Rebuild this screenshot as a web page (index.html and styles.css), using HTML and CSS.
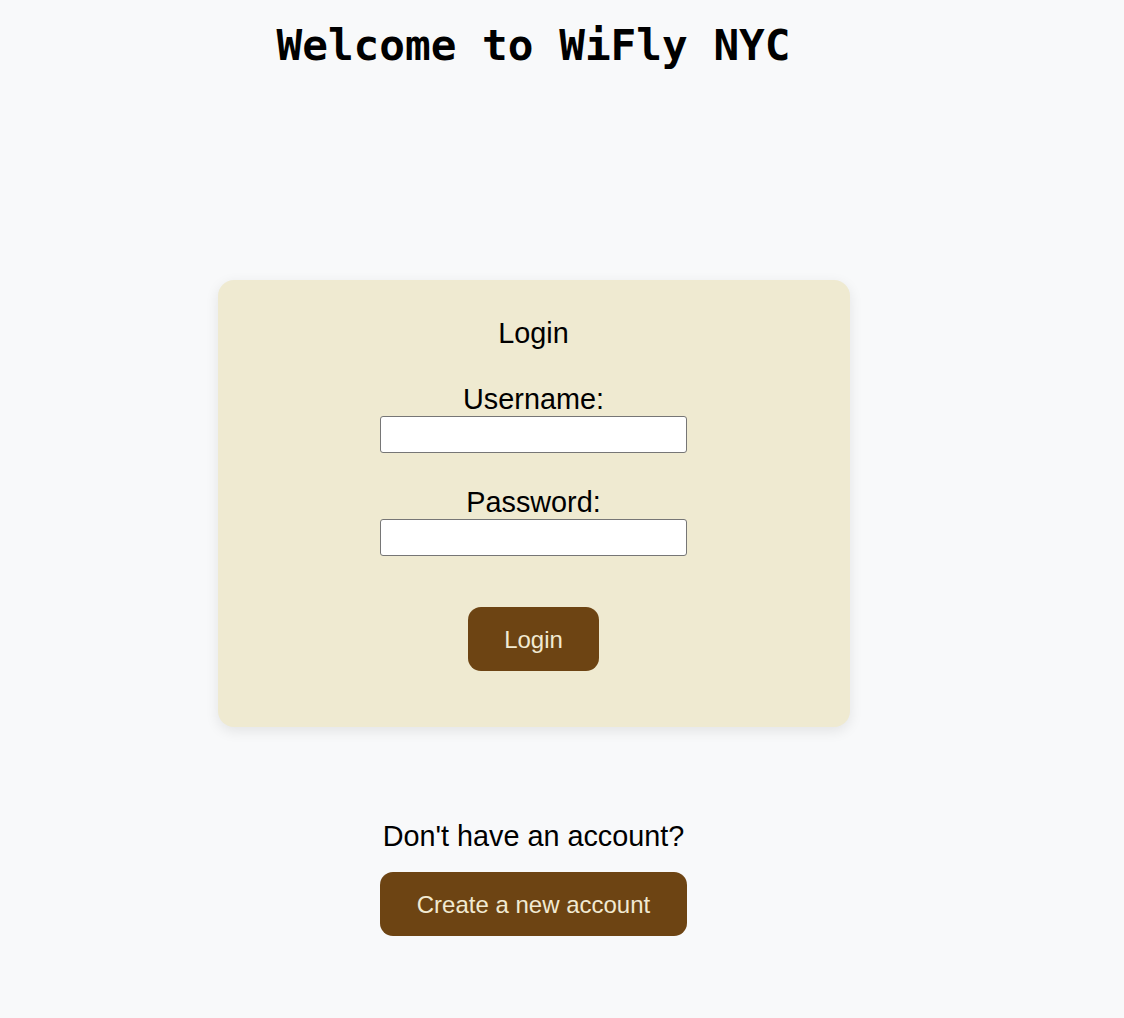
FILE: index.html
```html
<!DOCTYPE html>
<html lang="en">
<head>
<meta charset="utf-8">
<title>WiFly NYC</title>
<link rel="stylesheet" href="styles.css">
</head>
<body>
<div class="page">
  <h1 class="title">Welcome to WiFly NYC</h1>
  <form class="card">
    <h2 class="card-title">Login</h2>
    <label class="field-label" for="username">Username:</label>
    <input class="field-input" id="username" type="text">
    <label class="field-label" for="password">Password:</label>
    <input class="field-input" id="password" type="password">
    <button class="btn btn-login" type="button">Login</button>
  </form>
  <p class="signup-text">Don't have an account?</p>
  <button class="btn btn-create" type="button">Create a new account</button>
</div>
</body>
</html>
```

FILE: styles.css
```css
html, body {
  margin: 0;
  padding: 0;
  background: #f8f9fa;
}

body {
  font-family: "Liberation Sans", Arial, sans-serif;
  color: #000;
}

.page {
  width: 1067px;
  display: flex;
  flex-direction: column;
  align-items: center;
  padding-top: 20px;
}

.title {
  margin: 0;
  font-family: "DejaVu Sans Mono", monospace;
  font-weight: bold;
  font-size: 42.7px;
  line-height: 50px;
}

.card {
  margin-top: 210px;
  width: 632px;
  height: 447px;
  box-sizing: border-box;
  background: #efead1;
  border-radius: 16px;
  box-shadow: 0 4px 14px rgba(0, 0, 0, 0.09);
  display: flex;
  flex-direction: column;
  align-items: center;
  padding-top: 37px;
}

.card-title {
  margin: 0;
  font-size: 28.8px;
  font-weight: normal;
  line-height: 33px;
}

.field-label {
  display: block;
  margin-top: 33px;
  font-size: 28.8px;
  line-height: 33px;
}

.field-input {
  margin: 0;
  width: 307px;
  height: 37px;
  box-sizing: border-box;
  border: 1px solid #767676;
  border-radius: 3px;
  background: #fff;
  padding: 1px 4px;
  font-size: 16px;
}

.btn {
  border: none;
  background: #6d4413;
  color: #f1ead2;
  font-family: "Liberation Sans", Arial, sans-serif;
  font-size: 24px;
  line-height: 28px;
  height: 64px;
  padding: 2px 0 0;
  border-radius: 13px;
  cursor: pointer;
}

.btn-login {
  margin-top: 51px;
  width: 131px;
}

.signup-text {
  margin: 93px 0 0;
  font-size: 28.8px;
  line-height: 33px;
}

.btn-create {
  margin-top: 19px;
  width: 307px;
}
```
